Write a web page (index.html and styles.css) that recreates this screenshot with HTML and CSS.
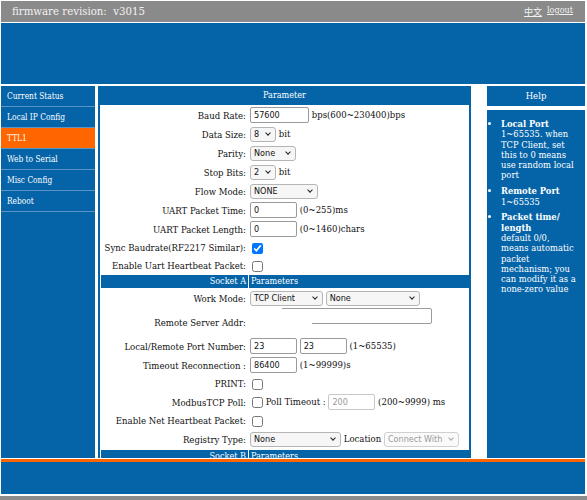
FILE: index.html
```html
<!DOCTYPE html>
<html>
<head>
<meta charset="utf-8">
<title>TTL1</title>
<link rel="stylesheet" href="styles.css">
</head>
<body>
<div class="page">
  <div class="topbar">
    <span class="fw">firmware revision:&nbsp;&nbsp;v3015</span>
    <span class="links"><a href="#">中文</a><a href="#">logout</a></span>
  </div>
  <div class="banner"></div>
  <div class="main">
    <ul class="menu">
      <li>Current Status</li>
      <li>Local IP Config</li>
      <li class="active">TTL1</li>
      <li>Web to Serial</li>
      <li>Misc Config</li>
      <li>Reboot</li>
    </ul>
    <div class="param">
      <div class="param-head">Parameter</div>
      <table class="form">
        <tr class="r18"><td class="lbl">Baud Rate:</td><td class="val"><input class="w59" type="text" value="57600"> bps(600~230400)bps</td></tr>
        <tr class="r18"><td class="lbl">Data Size:</td><td class="val"><span class="sel"><select class="w26"><option>8</option></select></span> bit</td></tr>
        <tr class="r18"><td class="lbl">Parity:</td><td class="val"><span class="sel"><select class="w46"><option>None</option></select></span></td></tr>
        <tr class="r18"><td class="lbl">Stop Bits:</td><td class="val"><span class="sel"><select class="w26"><option>2</option></select></span> bit</td></tr>
        <tr class="r18"><td class="lbl">Flow Mode:</td><td class="val"><span class="sel"><select class="w68"><option>NONE</option></select></span></td></tr>
        <tr class="r18"><td class="lbl">UART Packet Time:</td><td class="val"><input class="w47" type="text" value="0"> (0~255)ms</td></tr>
        <tr class="r18"><td class="lbl">UART Packet Length:</td><td class="val"><input class="w47" type="text" value="0"> (0~1460)chars</td></tr>
        <tr class="r17"><td class="lbl">Sync Baudrate(RF2217 Similar):</td><td class="val"><input type="checkbox" checked></td></tr>
        <tr class="r17"><td class="lbl">Enable Uart Heartbeat Packet:</td><td class="val"><input type="checkbox"></td></tr>
        <tr class="band"><td class="lbl">Socket A</td><td class="val">Parameters</td></tr>
        <tr class="r18"><td class="lbl">Work Mode:</td><td class="val"><span class="sel"><select class="w73"><option>TCP Client</option></select></span> <span class="sel"><select class="w94"><option>None</option></select></span></td></tr>
        <tr class="remote"><td class="lbl">Remote Server Addr:</td><td class="val top"><div class="addr"><input class="w182" type="text" value=""><span class="mask"></span></div></td></tr>
        <tr class="r18"><td class="lbl">Local/Remote Port Number:</td><td class="val"><input class="w47" type="text" value="23"> <input class="w47" type="text" value="23"> (1~65535)</td></tr>
        <tr class="r18"><td class="lbl">Timeout Reconnection :</td><td class="val"><input class="w47" type="text" value="86400"> (1~99999)s</td></tr>
        <tr class="r17"><td class="lbl">PRINT:</td><td class="val"><input type="checkbox"></td></tr>
        <tr class="r18"><td class="lbl">ModbusTCP Poll:</td><td class="val"><input type="checkbox"> Poll Timeout : <input class="w47" type="text" value="200" disabled> (200~9999) ms</td></tr>
        <tr class="r17"><td class="lbl">Enable Net Heartbeat Packet:</td><td class="val"><input type="checkbox"></td></tr>
        <tr class="r19"><td class="lbl">Registry Type:</td><td class="val"><span class="sel"><select class="w91"><option>None</option></select></span> Location <span class="sel dis"><select class="w75" disabled><option>Connect With</option></select></span></td></tr>
        <tr class="band"><td class="lbl">Socket B</td><td class="val">Parameters</td></tr>
      </table>
    </div>
    <div class="help">
      <div class="help-head">Help</div>
      <div class="help-body">
        <ul>
          <li><b>Local Port</b><br>1~65535. when<br>TCP Client, set<br>this to 0 means<br>use random local<br>port</li>
          <li><b>Remote Port</b><br>1~65535</li>
          <li><b>Packet time/<br>length</b><br>default 0/0,<br>means automatic<br>packet<br>mechanism; you<br>can modify it as a<br>none-zero value</li>
        </ul>
      </div>
    </div>
  </div>
  <div class="footer"></div>
</div>
<div class="bottom-strip"></div>
</body>
</html>
```

FILE: styles.css
```css
html, body {
  margin: 0;
  padding: 0;
  background: #ffffff;
}
body {
  width: 587px;
  height: 500px;
  overflow: hidden;
  font-family: "DejaVu Serif Condensed", "DejaVu Serif", serif;
  font-stretch: condensed;
  font-size: 9.5px;
  color: #111;
}
.page {
  width: 584px;
  padding: 1px 0 0 1px;
}
.topbar {
  height: 21px;
  background: #8a8a8a;
  color: #f2f2f2;
  display: flex;
  align-items: center;
  justify-content: space-between;
}
.fw {
  padding-left: 11px;
  font-family: "DejaVu Serif", serif;
  font-stretch: normal;
  font-size: 10.2px;
}
.links {
  display: flex;
  gap: 5px;
  padding-right: 12px;
  font-size: 9px;
}
.links a {
  color: #f2f2f2;
  text-decoration: underline;
}
.links a:first-child {
  font-family: "Noto Sans CJK SC", sans-serif;
}
.banner {
  margin-top: 1px;
  height: 61px;
  background: #0564a8;
}
.main {
  margin-top: 2px;
  height: 372px;
  overflow: hidden;
  display: flex;
  align-items: stretch;
}
.menu {
  list-style: none;
  margin: 0;
  padding: 0;
  width: 94px;
  background: #0564a8;
  flex: none;
}
.menu li {
  height: 20px;
  line-height: 20px;
  border-bottom: 1px solid #5a94c6;
  padding-left: 6px;
  color: #ffffff;
  font-size: 8.3px;
}
.menu li.active {
  background: #ff6600;
}
.param {
  flex: none;
  width: 369px;
  margin-left: 3px;
  border-left: 2px solid #0564a8;
  border-right: 2px solid #0564a8;
  background: #ffffff;
}
.param-head {
  height: 19px;
  line-height: 19px;
  background: #0564a8;
  color: #ffffff;
  text-align: center;
  font-size: 9px;
}
.form {
  border-collapse: separate;
  border-spacing: 1px;
  width: 370px;
  table-layout: fixed;
}
.form td {
  padding: 0;
  white-space: nowrap;
}
.form td.lbl {
  width: 145px;
  padding-right: 2px;
  text-align: right;
}
.form td.val {
  padding-left: 1px;
}
.form td.top {
  vertical-align: top;
}
.r17 { height: 17px; }
.r18 { height: 18px; }
.r19 { height: 19px; }
.remote { height: 28px; }
.band td {
  height: 13px;
  background: #0564a8;
  color: #ffffff;
  font-size: 9px;
  line-height: 13px;
}
.band td.val {
  padding-left: 2px;
}
input[type="text"] {
  box-sizing: border-box;
  height: 16px;
  margin: 0;
  padding: 0 3px;
  border: 1px solid #9a9a9a;
  border-radius: 2px;
  font-family: "DejaVu Sans Condensed", "DejaVu Sans", sans-serif;
  font-stretch: condensed;
  font-size: 9px;
  color: #111;
  vertical-align: middle;
  background: #fff;
}
input[type="text"]:disabled {
  color: #9a9a9a;
  border-color: #c8c8c8;
}
.sel {
  position: relative;
  display: inline-block;
  vertical-align: middle;
  line-height: 0;
}
.sel::after {
  content: "";
  position: absolute;
  right: 6px;
  top: 4px;
  width: 3px;
  height: 3px;
  border-right: 1.2px solid #222;
  border-bottom: 1.2px solid #222;
  transform: rotate(45deg);
  pointer-events: none;
}
.sel.dis::after {
  border-color: #a8a8a8;
}
select {
  -webkit-appearance: none;
  appearance: none;
  box-sizing: border-box;
  height: 15px;
  margin: 0;
  padding: 0 10px 0 3px;
  border: 1px solid #b5b5b5;
  border-radius: 3px;
  font-family: "DejaVu Sans Condensed", "DejaVu Sans", sans-serif;
  font-stretch: condensed;
  font-size: 9px;
  line-height: 13px;
  color: #111;
  background: #f6f6f6;
}
select:disabled {
  color: #9a9a9a;
  border-color: #d0d0d0;
  background: #fafafa;
  opacity: 1;
}
input[type="checkbox"] {
  width: 11px;
  height: 11px;
  margin: 0 0 0 2px;
  vertical-align: middle;
}
.w26 { width: 26px; }
.w46 { width: 46px; }
.w47 { width: 47px; }
.w59 { width: 59px; }
.w68 { width: 68px; }
.w73 { width: 73px; }
.w75 { width: 75px; }
.w91 { width: 91px; }
.w94 { width: 94px; }
.w182 { width: 182px; }
.addr {
  position: relative;
  width: 182px;
  height: 16px;
}
.addr .mask {
  position: absolute;
  left: -2px;
  top: 2px;
  width: 64px;
  height: 18px;
  background: #ffffff;
}
.addr::after {
  content: "";
  position: absolute;
  left: -2px;
  top: -2px;
  width: 34px;
  height: 4px;
  background: #ffffff;
}
.help {
  flex: none;
  width: 98px;
  margin-left: 16px;
  display: flex;
  flex-direction: column;
}
.help-head {
  height: 20px;
  line-height: 20px;
  background: #0564a8;
  color: #ffffff;
  text-align: center;
  font-size: 9.5px;
}
.help-body {
  margin-top: 4px;
  flex: 1;
  background: #0564a8;
  color: #ffffff;
  font-size: 9.3px;
  line-height: 10.3px;
}
.help-body ul {
  margin: 0;
  padding: 9px 0 0 14px;
}
.help-body li {
  margin-bottom: 5.5px;
}
.footer {
  margin-top: 1px;
  height: 32px;
  border-top: 3px solid #ff6600;
  background: #0564a8;
}
.bottom-strip {
  margin-top: 2px;
  height: 4px;
  background: #8c8c8c;
}
```
